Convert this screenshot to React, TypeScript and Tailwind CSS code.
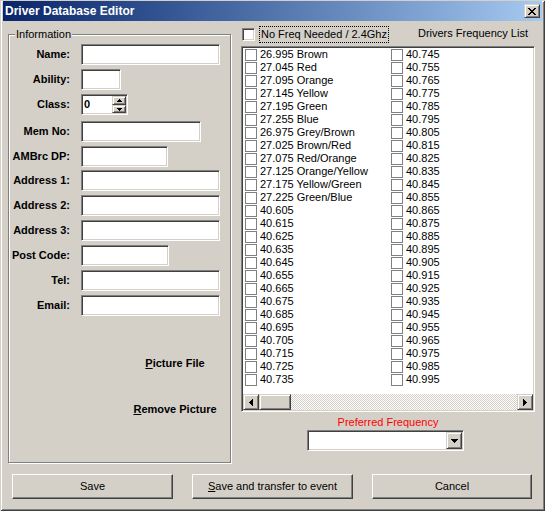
import React from "react";

const sunken =
  "border border-t-[#808080] border-l-[#808080] border-b-white border-r-white shadow-[inset_1px_1px_#404040,inset_-1px_-1px_#d4d0c8]";
const pushBtn =
  "border border-t-white border-l-white border-b-[#404040] border-r-[#404040] shadow-[inset_-1px_-1px_#808080]";
const sysBtn =
  "border border-t-[#d4d0c8] border-l-[#d4d0c8] border-b-[#404040] border-r-[#404040] shadow-[inset_1px_1px_#fff,inset_-1px_-1px_#808080] bg-[#d4d0c8]";

const fields = [
  { label: "Name:", w: 139, mt: 9 },
  { label: "Ability:", w: 40, mt: 4 },
  { label: "Class:", w: 47, mt: 4, spin: true },
  { label: "Mem No:", w: 120, mt: 6 },
  { label: "AMBrc DP:", w: 87, mt: 4 },
  { label: "Address 1:", w: 139, mt: 3 },
  { label: "Address 2:", w: 139, mt: 4 },
  { label: "Address 3:", w: 139, mt: 4 },
  { label: "Post Code:", w: 88, mt: 4 },
  { label: "Tel:", w: 139, mt: 4 },
  { label: "Email:", w: 139, mt: 4 },
];

const colours = [
  "26.995 Brown",
  "27.045 Red",
  "27.095 Orange",
  "27.145 Yellow",
  "27.195 Green",
  "27.255 Blue",
  "26.975 Grey/Brown",
  "27.025 Brown/Red",
  "27.075 Red/Orange",
  "27.125 Orange/Yellow",
  "27.175 Yellow/Green",
  "27.225 Green/Blue",
];
const freq = (start: number, n: number) =>
  Array.from({ length: n }, (_, i) => ((start + i * 10) / 1000).toFixed(3));
const col1 = [...colours, ...freq(40605, 14)];
const col2 = freq(40745, 26);

function CloseGlyph() {
  const rows = ["##....##", ".##..##.", "..####..", "...##...", "..####..", ".##..##.", "##....##"];
  return (
    <svg width="8" height="7" shapeRendering="crispEdges">
      {rows.flatMap((r, y) =>
        r.split("").map((c, x) => (c === "#" ? <rect key={`${x}-${y}`} x={x} y={y} width="1" height="1" fill="#000" /> : null))
      )}
    </svg>
  );
}

function Tri({ dir, size = 4 }: { dir: "left" | "right" | "up" | "down"; size?: number }) {
  const s = size;
  const w = dir === "left" || dir === "right" ? s : s * 2 - 1;
  const h = dir === "left" || dir === "right" ? s * 2 - 1 : s;
  const rects = [];
  for (let i = 0; i < s; i++) {
    const len = 1 + 2 * i;
    if (dir === "left") rects.push(<rect key={i} x={i} y={s - 1 - i} width="1" height={len} />);
    if (dir === "right") rects.push(<rect key={i} x={s - 1 - i} y={s - 1 - i} width="1" height={len} />);
    if (dir === "up") rects.push(<rect key={i} x={s - 1 - i} y={i} width={len} height="1" />);
    if (dir === "down") rects.push(<rect key={i} x={s - 1 - i} y={s - 1 - i} width={len} height="1" />);
  }
  return (
    <svg width={w} height={h} shapeRendering="crispEdges" fill="#000">
      {rects}
    </svg>
  );
}

function FreqRow({ text }: { text: string }) {
  return (
    <div className="flex h-[13px] items-center">
      <div className="h-[12px] w-[12px] shrink-0 border border-[#808080] bg-white" />
      <span className="ml-[3px] whitespace-nowrap leading-[13px]">{text}</span>
    </div>
  );
}

export default function App() {
  return (
    <div className="flex h-[511px] w-[545px] flex-col bg-[#d4d0c8] font-['Liberation_Sans',Arial,sans-serif] text-[11px] text-black shadow-[inset_1px_1px_#d4d0c8,inset_-1px_-1px_#404040,inset_2px_2px_#fff,inset_-2px_-2px_#808080]">
      {/* title bar */}
      <div className="mx-[3px] mt-[1px] flex h-[20px] items-center bg-gradient-to-r from-[#0a246a] to-[#a6caf0] pl-[2px] pr-[2px]">
        <span className="text-[12px] font-bold leading-none text-white">Driver Database Editor</span>
        <button className={`ml-auto flex h-[14px] w-[16px] items-center justify-center ${sysBtn}`}>
          <CloseGlyph />
        </button>
      </div>

      <div className="flex pl-[8px] pt-[13px]">
        {/* Information group */}
        <div className="relative h-[429px] w-[223px] border border-[#808080] shadow-[inset_1px_1px_#fff,1px_1px_#fff]">
          <span className="absolute left-[6px] top-[-7px] bg-[#d4d0c8] px-[1px] leading-[13px]">Information</span>
          <div className="flex flex-col">
            {fields.map((f) => (
              <div key={f.label} className="flex h-[21px] items-center" style={{ marginTop: f.mt }}>
                <span className="w-[61px] whitespace-nowrap text-right font-bold">{f.label}</span>
                <div className={`relative ml-[11px] flex h-[21px] items-center bg-white ${sunken}`} style={{ width: f.w }}>
                  {f.spin && (
                    <>
                      <span className="pl-[2px] font-bold">0</span>
                      <div className="ml-auto mr-[1px] flex h-[17px] w-[14px] flex-col">
                        <div className={`flex h-[9px] items-center justify-center ${sysBtn}`}>
                          <Tri dir="up" size={3} />
                        </div>
                        <div className={`flex h-[8px] items-center justify-center ${sysBtn}`}>
                          <Tri dir="down" size={3} />
                        </div>
                      </div>
                    </>
                  )}
                </div>
              </div>
            ))}
            <div className="ml-[122px] flex w-[88px] flex-col items-center font-bold">
              <span className="mt-[41px] leading-[13px]">
                <span className="underline">P</span>icture File
              </span>
              <span className="mt-[33px] leading-[13px]">
                <span className="underline">R</span>emove Picture
              </span>
            </div>
          </div>
        </div>

        {/* frequency panel */}
        <div className="ml-[10px] -mt-[8px] flex w-[294px] flex-col">
          <div className="flex h-[17px] items-center">
            <div className={`ml-[1px] h-[13px] w-[13px] bg-white ${sunken}`} />
            <span className="ml-[4px] flex h-[17px] items-center whitespace-nowrap border border-dotted border-black pl-[1px] pr-[1px]">
              No Freq Needed / 2.4Ghz
            </span>
            <span className="mb-[3px] ml-auto mr-[7px] whitespace-nowrap">Drivers Frequency List</span>
          </div>

          <div className={`mt-[3px] flex h-[366px] flex-col bg-white ${sunken}`}>
            <div className="flex flex-1 overflow-hidden p-[1px]">
              <div className="flex w-[146px] flex-col pl-[2px]">
                {col1.map((t) => (
                  <FreqRow key={t} text={t} />
                ))}
              </div>
              <div className="flex flex-col pl-[2px]">
                {col2.map((t) => (
                  <FreqRow key={t} text={t} />
                ))}
              </div>
            </div>
            <div className="mx-[1px] mb-[1px] flex h-[16px]">
              <div className={`flex w-[16px] items-center justify-center ${sysBtn}`}>
                <Tri dir="left" />
              </div>
              <div className={`w-[32px] ${sysBtn}`} />
              <div className="flex-1 bg-[repeating-conic-gradient(#d4d0c8_0%_25%,#ffffff_0%_50%)] bg-[length:2px_2px]" />
              <div className={`flex w-[16px] items-center justify-center ${sysBtn}`}>
                <Tri dir="right" />
              </div>
            </div>
          </div>

          <span className="mt-[4px] text-center leading-[13px] text-[#ff0000]">Preferred Frequency</span>
          <div className={`ml-[66px] mt-[1px] flex h-[21px] w-[157px] justify-end bg-white p-[1px] ${sunken}`}>
            <div className={`flex h-[17px] w-[16px] items-center justify-center ${sysBtn}`}>
              <Tri dir="down" />
            </div>
          </div>
        </div>
      </div>

      {/* buttons */}
      <div className="ml-[12px] mt-[11px] flex gap-[19px]">
        <button className={`h-[25px] w-[161px] ${pushBtn}`}>Save</button>
        <button className={`h-[25px] w-[161px] ${pushBtn}`}>
          <span className="underline">S</span>ave and transfer to event
        </button>
        <button className={`h-[25px] w-[160px] ${pushBtn}`}>Cancel</button>
      </div>
    </div>
  );
}
